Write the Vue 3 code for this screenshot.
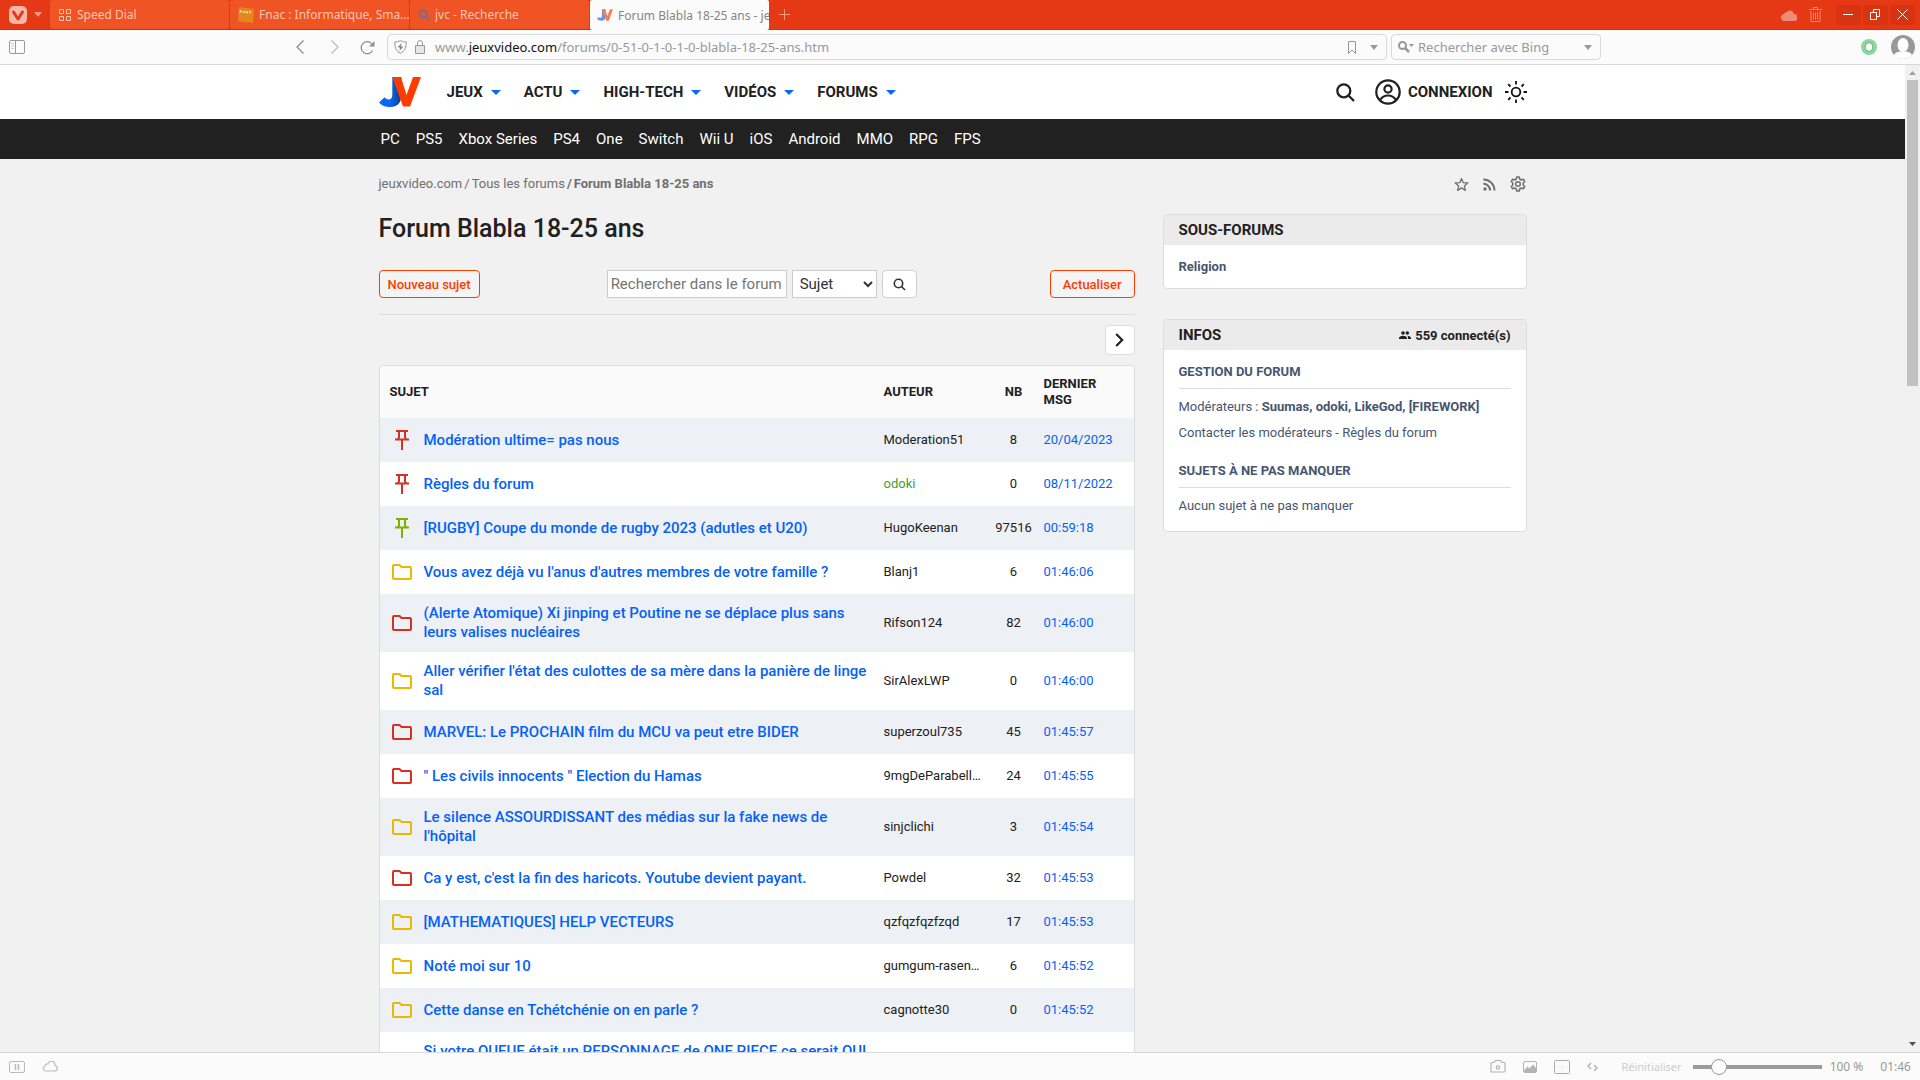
<template>
    <div class="browser">
        <header class="tabbar">
            <button class="menu-btn" aria-label="Menu">
                <svg width="18" height="18" viewBox="0 0 18 18">
                    <rect width="18" height="18" rx="5" fill="#f9b6a6" />
                    <path d="M4.500 6l4.500 7 4.500-7" fill="none" stroke="#e53814" stroke-width="3" stroke-linecap="round" stroke-linejoin="round" />
                </svg>
                <svg width="8" height="5" viewBox="0 0 8 5"><path d="M0 0h8L4 5z" fill="#f59a85" /></svg>
            </button>
            <button v-for="tab in tabs" :key="tab.label" class="tab" :class="{ active: tab.icon === 'jv' }">
                <svg v-if="tab.icon === 'grid'" width="14" height="14" viewBox="0 0 14 14" fill="none" stroke="#fbc4b3">
                    <path d="M1.500 1.500h4v4h-4zM8.500 1.500h4v4h-4zM1.500 8.500h4v4h-4zM8.500 8.500h4v4h-4z" />
                </svg>
                <svg v-else-if="tab.icon === 'fnac'" width="16" height="16" viewBox="0 0 16 16">
                    <path d="M1 0l15 2-1 14-15-1.500z" fill="#e3861b" />
                    <path d="M2 6V3.500h1.500M2 4.500h1.500M5 6V4.500h1.500V6M8 6V4.500h1.500V6H8M13 4.500h-1.500V6H13" fill="none" stroke="#fbd79a" />
                </svg>
                <svg v-else-if="tab.icon === 'search'" width="12" height="12" viewBox="0 0 12 12" fill="none" stroke="#7c6a8c" stroke-width="2">
                    <circle cx="5" cy="5" r="3.500" /><path d="M7.500 7.500l3.500 3.500" />
                </svg>
                <svg v-else width="16" height="12" viewBox="0 0 42 30">
                    <path d="M13 0h9v18q0 12-11 12Q4 30 0 25l5-5q2 2.500 4 2.500 4 0 4-5z" fill="#5c97f5" />
                    <path d="M13 0h9l5 18 7-18h8L31 30h-7z" fill="#ff7a57" />
                </svg>
                <span>{{ tab.label }}</span>
            </button>
            <button class="new-tab" aria-label="Nouvel onglet">
                <svg width="11" height="11" viewBox="0 0 11 11"><path d="M5.500 0v11M0 5.500h11" stroke="#f59a85" /></svg>
            </button>
            <div class="window-tools">
                <svg width="16" height="12" viewBox="0 0 16 12"><path d="M4 12a3.500 3.500 0 0 1-1-7 3 3 0 0 1 3-2 4 4 0 0 1 7 2 3.500 3.500 0 0 1 0 7z" fill="#f18a74" /></svg>
                <svg class="trash" width="13" height="16" viewBox="0 0 13 16" fill="none" stroke="#f18a74"><path d="M0 2.500h13M4.500 2V.5h4V2M2 4v10.500h9V4M4.500 5.500v7M6.500 5.500v7M8.500 5.500v7" /></svg>
                <button aria-label="Réduire"><svg width="11" height="11" viewBox="0 0 11 11"><path d="M0 5.500h10" stroke="#fff" /></svg></button>
                <button aria-label="Restaurer"><svg width="11" height="11" viewBox="0 0 11 11" fill="none" stroke="#fff"><path d="M.5 3.500h6v7h-6zM3.500 3V.5h6v7H7" /></svg></button>
                <button aria-label="Fermer"><svg width="11" height="11" viewBox="0 0 11 11"><path d="M.5.5l10 10M10.500.5l-10 10" stroke="#fff" /></svg></button>
            </div>
        </header>

        <div class="toolbar">
            <div class="toolbar-left">
                <button aria-label="Panneau">
                    <svg width="16" height="14" viewBox="0 0 16 14" fill="none" stroke="#999"><rect x=".5" y=".5" width="15" height="13" rx="1.500" /><path d="M6.500 1v12" /><path d="M2.500 3.500h2M2.500 6h2M2.500 8.500h2" stroke="#bbb" /></svg>
                </button>
                <div class="history">
                    <button aria-label="Précédent"><svg width="8" height="14" viewBox="0 0 8 14"><path d="M7.500.5L1 7l6.500 6.500" fill="none" stroke="#888" stroke-width="1.200" /></svg></button>
                    <button aria-label="Suivant"><svg width="8" height="14" viewBox="0 0 8 14"><path d="M.5.5L7 7l-6.500 6.500" fill="none" stroke="#bbb" stroke-width="1.200" /></svg></button>
                    <button aria-label="Recharger"><svg width="15" height="15" viewBox="0 0 15 15"><path d="M12.500 10.500A6 6 0 1 1 11.500 3.500" fill="none" stroke="#8d8d8d" stroke-width="1.300" /><path d="M14.500 1v5.500H9z" fill="#8d8d8d" /></svg></button>
                </div>
            </div>
            <div class="field url">
                <svg width="13" height="14" viewBox="0 0 13 14"><path d="M6.500.7q3 1.500 5.800 1.300 0 9-5.800 11.300Q.7 11 .7 2 3.500 2.200 6.500.7z" fill="none" stroke="#999" /><path d="M7.500 3L3.500 7.500h2.500L5.500 11l4-4.500H7z" fill="#888" /></svg>
                <svg width="10" height="14" viewBox="0 0 10 14"><path d="M.5 5.500h9v8h-9z" fill="#e6e6e6" stroke="#999" /><path d="M2.500 5.500V3a2.500 2.500 0 0 1 5 0v2.500" fill="none" stroke="#999" /></svg>
                <a class="address" href="#">www.<b>jeuxvideo.com</b>/forums/0-51-0-1-0-1-0-blabla-18-25-ans.htm</a>
                <svg class="bookmark" width="8" height="13" viewBox="0 0 8 13"><path d="M.5.5h7v12L4 9l-3.500 3.500z" fill="none" stroke="#999" /></svg>
                <svg width="8" height="5" viewBox="0 0 8 5"><path d="M0 0h8L4 5z" fill="#999" /></svg>
            </div>
            <div class="field bing">
                <svg width="16" height="12" viewBox="0 0 16 12"><circle cx="4.500" cy="4.500" r="3.500" fill="none" stroke="#999" stroke-width="2" /><path d="M7 7l4 4" stroke="#999" stroke-width="2.500" /><path d="M11 3h5l-2.500 3z" fill="#999" /></svg>
                <input type="text" placeholder="Rechercher avec Bing" aria-label="Rechercher avec Bing">
                <svg width="8" height="5" viewBox="0 0 8 5"><path d="M0 0h8L4 5z" fill="#999" /></svg>
            </div>
            <div class="extensions">
                <svg width="16" height="16" viewBox="0 0 16 16"><circle cx="8" cy="8" r="8" fill="#8ed79c" /><ellipse cx="8" cy="8" rx="4.200" ry="5" fill="#6cbb7c" /><ellipse cx="8" cy="8" rx="3.200" ry="3.800" fill="#fff" /></svg>
                <svg width="24" height="24" viewBox="0 0 24 24"><circle cx="12" cy="12" r="12" fill="#999" /><ellipse cx="12" cy="10" rx="5.500" ry="7" fill="#fff" /><path d="M3 20q1-3 6-3.500h6q5 .5 6 3.500-3 4-9 4t-9-4z" fill="#fff" /></svg>
            </div>
        </div>

        <div class="viewport">
            <div class="page">
                <div class="site-header">
                    <div class="container header-row">
                        <a href="#" class="logo" aria-label="Accueil">
                            <svg width="42" height="30" viewBox="0 0 42 30">
                                <defs>
                                    <linearGradient id="jshade" x1="0" y1="0" x2="1" y2="0">
                                        <stop offset="0.500" stop-color="#0768f8" />
                                        <stop offset="1" stop-color="#15397c" />
                                    </linearGradient>
                                </defs>
                                <path d="M13.300 0h9v18q0 12-11.300 12Q4 30 0 25.500l5.500-5.300q2 2.300 4 2.300 3.800 0 3.800-5z" fill="url(#jshade)" />
                                <path d="M13.300 0h8.700l5.500 18L34 0h8L31 29.500h-7z" fill="#ff3c00" />
                            </svg>
                        </a>
                        <nav class="main-nav">
                            <button v-for="item in mainNav" :key="item">
                                {{ item }}
                                <svg width="10" height="5" viewBox="0 0 10 5"><path d="M0 0h10L5 5z" fill="#0768f8" /></svg>
                            </button>
                        </nav>
                        <button class="icon-btn search-btn" aria-label="Rechercher">
                            <svg width="19" height="19" viewBox="0 0 19 19" fill="none" stroke="#212121" stroke-width="2.300"><circle cx="7.800" cy="7.800" r="6.500" /><path d="M12.500 12.500l5.500 5.500" /></svg>
                        </button>
                        <a href="#" class="login">
                            <svg width="26" height="26" viewBox="0 0 26 26" fill="none" stroke="#212121" stroke-width="2.200"><circle cx="13" cy="13" r="11.700" /><circle cx="13" cy="10" r="3.600" /><path d="M5 21q3-4.500 8-4.500t8 4.500" /></svg>
                            CONNEXION
                        </a>
                        <button class="icon-btn" aria-label="Mode sombre">
                            <svg width="22" height="22" viewBox="0 0 22 22" fill="none" stroke="#111" stroke-width="1.800"><circle cx="11" cy="11" r="4.300" /><path d="M11 0v3.500M11 18.500V22M0 11h3.500M18.500 11H22M3.200 3.200l2.300 2.300M16.500 16.500l2.300 2.300M18.800 3.200l-2.300 2.300M5.500 16.500l-2.300 2.300" /></svg>
                        </button>
                    </div>
                </div>
                <nav class="platforms">
                    <div class="container">
                        <a v-for="item in platforms" :key="item" href="#">{{ item }}</a>
                    </div>
                </nav>

                <div class="container breadcrumb">
                    <div class="crumbs">
                        <a href="#">jeuxvideo.com</a><span>/</span><a href="#">Tous les forums</a><b>/</b><b>Forum Blabla 18-25 ans</b>
                    </div>
                    <div class="forum-tools">
                        <button aria-label="Favori"><svg width="15" height="15" viewBox="0 0 15 15"><path d="M7.500 1.500l1.700 4.200 4.600.3-3.500 2.900 1.100 4.500-3.900-2.500-3.900 2.500 1.100-4.500L1.200 6l4.600-.3z" fill="none" stroke="#707070" stroke-width="1.300" stroke-linejoin="round" /></svg></button>
                        <button aria-label="Flux RSS"><svg width="13" height="13" viewBox="0 0 13 13" fill="none" stroke="#707070" stroke-width="2"><circle cx="2" cy="11" r="1.700" fill="#707070" stroke="none" /><path d="M.3 5.800A6.500 6.500 0 0 1 7 12.500M.3 1.500A11 11 0 0 1 11.500 12.500" /></svg></button>
                        <button aria-label="Préférences"><svg width="16" height="16" viewBox="0 0 16 16" fill="none" stroke="#707070" stroke-width="1.500" stroke-linejoin="round"><path d="M6.300 3L6.700 1h2.600l.4 2 1.700 1 2-.8 1.300 2.300L13.200 7v2l1.500 1.500-1.300 2.300-2-.8-1.700 1-.4 2H6.700l-.4-2-1.700-1-2 .8-1.300-2.300L2.800 9V7L1.300 5.500l1.300-2.300 2 .8z" /><circle cx="8" cy="8" r="2.300" /></svg></button>
                    </div>
                </div>

                <div class="container columns">
                    <main>
                        <h1>Forum Blabla 18-25 ans</h1>
                        <div class="actions">
                            <button class="outline">Nouveau sujet</button>
                            <form class="search" @submit.prevent>
                                <input v-model="query" type="text" placeholder="Rechercher dans le forum" aria-label="Rechercher dans le forum">
                                <select v-model="searchType" aria-label="Type de recherche">
                                    <option>Sujet</option>
                                    <option>Auteur</option>
                                </select>
                                <button aria-label="Lancer la recherche">
                                    <svg width="13" height="13" viewBox="0 0 13 13" fill="none" stroke="#333" stroke-width="1.600"><circle cx="5.500" cy="5.500" r="4.200" /><path d="M8.500 8.500L12 12" /></svg>
                                </button>
                            </form>
                            <button class="outline refresh">Actualiser</button>
                        </div>
                        <div class="pager">
                            <a href="#" aria-label="Page suivante"><svg width="9" height="14" viewBox="0 0 9 14"><path d="M1.200 1l6 6-6 6" fill="none" stroke="#212121" stroke-width="2.200" /></svg></a>
                        </div>
                        <div class="topics">
                            <table>
                                <colgroup>
                                    <col class="col-icon"><col><col class="col-author"><col class="col-nb"><col class="col-date">
                                </colgroup>
                                <thead>
                                    <tr>
                                        <th colspan="2">SUJET</th>
                                        <th class="author">AUTEUR</th>
                                        <th class="nb">NB</th>
                                        <th class="date">DERNIER MSG</th>
                                    </tr>
                                </thead>
                                <tbody>
                                    <tr v-for="topic in topics" :key="topic.title">
                                        <td class="icon" :class="topic.color">
                                            <svg v-if="topic.pin" width="14" height="20" viewBox="0 0 14 20" fill="none" stroke="currentColor" stroke-width="2"><path d="M1 1h12M4 1v6.500L2 10M10 1v6.500l2 2.500M0 9.500h14M7 10v10" /></svg>
                                            <svg v-else width="20" height="16" viewBox="0 0 20 16" fill="none" stroke="currentColor" stroke-width="2" stroke-linejoin="round"><path d="M1.800 1H7.500l2 2h8.600q.9 0 .9.900v10.200q0 .9-.9.900H1.900q-.9 0-.9-.9V1.900Q1 1 1.900 1z" /></svg>
                                        </td>
                                        <td class="title"><a href="#">{{ topic.title }}</a></td>
                                        <td class="author" :class="{ moderator: topic.author === 'odoki' }">{{ topic.author }}</td>
                                        <td class="nb">{{ topic.nb }}</td>
                                        <td class="date"><a href="#">{{ topic.date }}</a></td>
                                    </tr>
                                </tbody>
                            </table>
                        </div>
                    </main>

                    <aside>
                        <section class="card">
                            <h2>SOUS-FORUMS</h2>
                            <div class="card-body">
                                <a href="#" class="strong">Religion</a>
                            </div>
                        </section>
                        <section class="card">
                            <h2>
                                INFOS
                                <span class="online">
                                    <svg width="12" height="8" viewBox="0 0 12 8" fill="#212121"><circle cx="4" cy="2" r="1.800" /><circle cx="8.300" cy="2" r="1.800" /><path d="M0 8V6.500Q1 4.700 4 4.700t4 1.800V8zM9 8V6.500q0-1-.8-1.800Q11 4.800 12 6.500V8z" /></svg>
                                    559 connecté(s)
                                </span>
                            </h2>
                            <div class="card-body">
                                <h3>GESTION DU FORUM</h3>
                                <p>Modérateurs : <b>Suumas, odoki, LikeGod, [FIREWORK]</b></p>
                                <p><a href="#">Contacter les modérateurs</a> - <a href="#">Règles du forum</a></p>
                                <h3 class="spaced">SUJETS À NE PAS MANQUER</h3>
                                <p>Aucun sujet à ne pas manquer</p>
                            </div>
                        </section>
                    </aside>
                </div>
            </div>
            <div class="scrollbar">
                <svg width="7" height="4" viewBox="0 0 7 4"><path d="M0 4h7L3.500 0z" fill="#a3a3a3" /></svg>
                <div class="track"><div class="thumb"></div></div>
                <svg width="7" height="4" viewBox="0 0 7 4"><path d="M0 0h7L3.500 4z" fill="#505050" /></svg>
            </div>
        </div>

        <footer class="statusbar">
            <button aria-label="Pause"><svg width="16" height="12" viewBox="0 0 16 12" fill="none" stroke="#bbb"><rect x=".5" y=".5" width="15" height="11" rx="1.500" /><path d="M6.500 3v6M9.500 3v6" stroke-width="1.500" /></svg></button>
            <button aria-label="Synchronisation"><svg width="16" height="11" viewBox="0 0 16 11" fill="none" stroke="#bbb" stroke-width="1.200"><path d="M3.500 10a2.600 2.600 0 0 1-.5-5 2.500 2.500 0 0 1 3-2 3.500 3.500 0 0 1 7 1.500 2.800 2.800 0 0 1 0 5.500z" /></svg></button>
            <span class="spacer"></span>
            <button aria-label="Capture"><svg width="16" height="13" viewBox="0 0 16 13" fill="none" stroke="#b4b4b4" stroke-width="1.200"><path d="M1 3.500q0-1 1-1h2l1.500-2h5l1.500 2h2q1 0 1 1V11q0 1-1 1H2q-1 0-1-1z" /><circle cx="8" cy="7.500" r="1.700" /></svg></button>
            <button aria-label="Images"><svg width="14" height="12" viewBox="0 0 14 12"><rect x=".5" y=".5" width="13" height="11" rx="1.500" fill="none" stroke="#b4b4b4" /><path d="M1 9.500l3.500-4 2 2 3.500-4 3 3.500v4.500H1z" fill="#b4b4b4" /></svg></button>
            <button aria-label="Mosaïque"><svg width="16" height="14" viewBox="0 0 16 14" fill="none"><rect x=".5" y=".5" width="15" height="13" rx="1" stroke="#aaa" /><path d="M8 1v12M1 7h14" stroke="#f0f0f0" /></svg></button>
            <button aria-label="Actions"><svg width="11" height="10" viewBox="0 0 11 10" fill="none" stroke="#b0b0b0" stroke-width="1.400"><path d="M4 1L1 4l3 3M7 3l3 3-3 3" /></svg></button>
            <button class="reset">Réinitialiser</button>
            <input v-model="zoom" type="range" min="20" max="500" aria-label="Zoom">
            <span>100 %</span>
            <span>01:46</span>
        </footer>
    </div>
</template>

<script setup>
import { ref } from 'vue';

const query = ref('');
const searchType = ref('Sujet');
const zoom = ref(100);

const tabs = [
    { icon: 'grid', label: 'Speed Dial' },
    { icon: 'fnac', label: 'Fnac : Informatique, Sma…' },
    { icon: 'search', label: 'jvc - Recherche' },
    { icon: 'jv', label: 'Forum Blabla 18-25 ans - jeu' },
];

const mainNav = ['JEUX', 'ACTU', 'HIGH-TECH', 'VIDÉOS', 'FORUMS'];

const platforms = ['PC', 'PS5', 'Xbox Series', 'PS4', 'One', 'Switch', 'Wii U', 'iOS', 'Android', 'MMO', 'RPG', 'FPS'];

const topics = [
    { pin: true, color: 'red', title: 'Modération ultime= pas nous', author: 'Moderation51', nb: 8, date: '20/04/2023' },
    { pin: true, color: 'red', title: 'Règles du forum', author: 'odoki', nb: 0, date: '08/11/2022' },
    { pin: true, color: 'green', title: '[RUGBY] Coupe du monde de rugby 2023 (adutles et U20)', author: 'HugoKeenan', nb: 97516, date: '00:59:18' },
    { color: 'yellow', title: "Vous avez déjà vu l'anus d'autres membres de votre famille ?", author: 'Blanj1', nb: 6, date: '01:46:06' },
    { color: 'red', title: '(Alerte Atomique) Xi jinping et Poutine ne se déplace plus sans leurs valises nucléaires', author: 'Rifson124', nb: 82, date: '01:46:00' },
    { color: 'yellow', title: "Aller vérifier l'état des culottes de sa mère dans la panière de linge sal", author: 'SirAlexLWP', nb: 0, date: '01:46:00' },
    { color: 'red', title: 'MARVEL: Le PROCHAIN film du MCU va peut etre BIDER', author: 'superzoul735', nb: 45, date: '01:45:57' },
    { color: 'red', title: '" Les civils innocents " Election du Hamas', author: '9mgDeParabellum', nb: 24, date: '01:45:55' },
    { color: 'yellow', title: "Le silence ASSOURDISSANT des médias sur la fake news de l'hôpital", author: 'sinjclichi', nb: 3, date: '01:45:54' },
    { color: 'red', title: "Ca y est, c'est la fin des haricots. Youtube devient payant.", author: 'Powdel', nb: 32, date: '01:45:53' },
    { color: 'yellow', title: '[MATHEMATIQUES] HELP VECTEURS', author: 'qzfqzfqzfzqd', nb: 17, date: '01:45:53' },
    { color: 'yellow', title: 'Noté moi sur 10', author: 'gumgum-rasengan', nb: 6, date: '01:45:52' },
    { color: 'yellow', title: 'Cette danse en Tchétchénie on en parle ?', author: 'cagnotte30', nb: 0, date: '01:45:52' },
    { color: 'yellow', title: 'Si votre QUEUE était un PERSONNAGE de ONE PIECE ce serait QUI et pourquoi ?', author: 'luffy', nb: 4, date: '01:45:51' },
];
</script>

<style>
body {
    background: #f1f1f1;
    overflow: hidden;
}
</style>

<style scoped>
.browser {
    display: flex;
    flex-direction: column;
    height: 100vh;
    font-family: "Noto Sans", sans-serif;
    font-size: 12px;
    color: #999;
}

.browser * {
    box-sizing: border-box;
}

svg {
    display: block;
    flex: none;
}

button {
    display: flex;
    align-items: center;
    justify-content: center;
    padding: 0;
    border: 0;
    background: none;
    font: inherit;
    color: inherit;
}

a {
    color: inherit;
    text-decoration: none;
}

/* tabs */
.tabbar {
    display: flex;
    flex: none;
    height: 30px;
    background: #e53814;
    border-bottom: 1px solid #dc2f0c;
}

.menu-btn {
    width: 50px;
    gap: 7px;
}

.tab {
    flex: 0 1 179px;
    justify-content: flex-start;
    gap: 5px;
    min-width: 0;
    margin-right: 1px;
    padding-left: 8px;
    border-radius: 2px;
    background: #f05424;
    color: #fbc4b3;
    overflow: hidden;
}

.tab span {
    overflow: hidden;
    white-space: nowrap;
}

.tab.active {
    height: 30px;
    padding-left: 7px;
    background: #fbfbfb;
    color: #858585;
}

.new-tab {
    width: 28px;
}

.window-tools {
    display: flex;
    align-items: center;
    gap: 2px;
    margin-left: auto;
    padding-right: 5px;
}

.window-tools .trash {
    margin: 0 12px 0 10px;
}

.window-tools button {
    width: 25px;
    height: 20px;
    border-radius: 3px;
    background: #d93411;
}

/* address bar */
.toolbar {
    display: flex;
    flex: none;
    align-items: center;
    height: 35px;
    background: #fbfbfb;
    border-bottom: 1px solid #d9d9d9;
}

.toolbar-left {
    display: flex;
    justify-content: space-between;
    width: 387px;
    padding: 0 12px 0 9px;
}

.history {
    display: flex;
    gap: 27px;
}

.history button:last-child {
    margin-left: -6px;
}

.field {
    display: flex;
    align-items: center;
    height: 26px;
    margin-right: 4px;
    border: 1px solid #d9d9d9;
    border-radius: 4px;
    font-size: 13px;
}

.url {
    flex: 1;
    gap: 8px;
    padding: 0 8px 0 6px;
}

.address {
    flex: 1;
    padding-left: 2px;
}

.address b {
    font-weight: 400;
    color: #111;
}

.bookmark {
    margin-right: 6px;
}

.bing {
    width: 210px;
    gap: 4px;
    padding: 0 8px 0 6px;
}

.bing input {
    flex: 1;
    min-width: 0;
    padding: 0;
    border: 0;
    outline: 0;
    background: none;
    font: inherit;
}

.bing input::placeholder {
    color: #999;
}

.extensions {
    display: flex;
    align-items: center;
    justify-content: flex-end;
    gap: 14px;
    width: 315px;
    padding-right: 5px;
}

/* page */
.viewport {
    display: flex;
    flex: 1;
    min-height: 0;
}

.page {
    flex: 1;
    min-width: 0;
    overflow: hidden;
    background: #f1f1f1;
    font-family: Roboto, sans-serif;
    color: #212121;
}

.container {
    max-width: 1148px;
    margin: 0 auto;
}

.site-header {
    background: #fff;
}

.header-row {
    display: flex;
    align-items: center;
    height: 54px;
    font-size: 15px;
    font-weight: 700;
}

.main-nav {
    display: flex;
    gap: 23px;
    margin-left: 26px;
    margin-right: auto;
}

.main-nav button {
    gap: 8px;
}

.search-btn {
    margin-right: 20px;
}

.login {
    display: flex;
    align-items: center;
    gap: 7px;
    margin-right: 12px;
}

.platforms {
    background: #212121;
    color: #fff;
    font-size: 15px;
}

.platforms .container {
    display: flex;
    align-items: center;
    gap: 16px;
    height: 40px;
    padding-left: 2px;
}

.breadcrumb {
    display: flex;
    justify-content: space-between;
    align-items: center;
    height: 50px;
    font-size: 13px;
    color: #707070;
}

.crumbs {
    display: flex;
    gap: 2px;
    padding-bottom: 2px;
}

.forum-tools {
    display: flex;
    gap: 14px;
    padding-right: 1px;
}

.columns {
    display: grid;
    grid-template-columns: minmax(0, 1fr) 364px;
    gap: 28px;
}

h1 {
    margin: 4px 0 25px;
    font-size: 25px;
    line-height: 32px;
    font-weight: 500;
}

.actions {
    display: flex;
    align-items: center;
    justify-content: space-between;
    padding-bottom: 16px;
    border-bottom: 1px solid #dcdcdc;
}

.outline {
    height: 28px;
    padding: 0 8px;
    border: 1px solid #ff3c00;
    border-radius: 4px;
    background: #f4f4f4;
    font-size: 13px;
    font-weight: 500;
    color: #ff3c00;
}

.refresh {
    padding: 0 12px;
}

.search {
    display: flex;
    gap: 5px;
    margin-right: 6px;
}

.search input,
.search select {
    height: 28px;
    border: 1px solid #ccc;
    background: #fff;
    font-family: inherit;
    font-size: 15px;
    color: #333;
}

.search input {
    width: 180px;
    padding: 0 3px;
}

.search select {
    width: 85px;
    padding: 0 3px;
}

.search button {
    width: 35px;
    border: 1px solid #d0d0d0;
    border-radius: 4px;
    background: #fff;
}

.pager {
    display: flex;
    justify-content: flex-end;
    padding: 10px 0;
}

.pager a {
    display: flex;
    align-items: center;
    justify-content: center;
    width: 30px;
    height: 30px;
    border: 1px solid #dcdcdc;
    border-radius: 4px;
    background: #fff;
}

.topics {
    border: 1px solid #dcdcdc;
    border-radius: 4px;
    overflow: hidden;
}

table {
    width: 100%;
    table-layout: fixed;
    border-collapse: collapse;
    font-size: 13px;
}

.col-icon {
    width: 44px;
}

.col-author {
    width: 114px;
}

.col-nb {
    width: 50px;
}

.col-date {
    width: 96px;
}

th {
    height: 52px;
    padding: 0 10px;
    background: #fafafa;
    line-height: 16px;
    font-weight: 700;
    text-align: left;
}

td {
    height: 44px;
    padding: 0 0 2px;
}

tbody tr {
    background: #fff;
}

tbody tr:nth-child(odd) {
    background: #edf0f5;
}

.icon {
    padding: 0;
}

.icon svg {
    margin: 0 auto;
}

.red {
    color: #d83020;
}

.green {
    color: #7fb000;
}

.yellow {
    color: #e9b800;
}

.title {
    padding: 10px 6px 10px 0;
    font-size: 15px;
    line-height: 19px;
    font-weight: 500;
    color: #0562f5;
}

.author {
    padding-left: 10px;
    padding-right: 4px;
    overflow: hidden;
    text-overflow: ellipsis;
    white-space: nowrap;
}

.moderator {
    color: #3fa033;
}

.nb {
    padding-left: 2px;
    padding-right: 0;
    text-align: center;
}

.date {
    padding-left: 6px;
    padding-right: 20px;
}

.date a {
    color: #0562f5;
}

/* sidebar */
aside {
    padding-top: 5px;
}

.card {
    margin-bottom: 30px;
    border: 1px solid #dcdcdc;
    border-radius: 4px;
    background: #fff;
    overflow: hidden;
    font-size: 13px;
    color: #475670;
}

.card h2 {
    display: flex;
    align-items: center;
    justify-content: space-between;
    height: 30px;
    margin: 0;
    padding: 0 15px;
    background: #ebebeb;
    font-size: 15px;
    font-weight: 700;
    color: #212121;
}

.online {
    display: flex;
    align-items: center;
    gap: 4px;
    font-size: 13px;
}

.card-body {
    padding: 12px 15px 11px;
    line-height: 20px;
}

.card-body .strong {
    font-weight: 700;
}

.card h3 {
    margin: 0 0 8px;
    padding-bottom: 6px;
    border-bottom: 1px solid #dcdcdc;
    font-size: 13px;
    line-height: 20px;
}

.card .spaced {
    padding-top: 12px;
}

.card p {
    margin: 0 0 6px;
}

.card p:last-child {
    margin-bottom: 4px;
}

.scrollbar {
    display: flex;
    flex-direction: column;
    align-items: center;
    width: 15px;
    padding: 6px 0;
    background: #f1f1f1;
}

.track {
    flex: 1;
    align-self: stretch;
    padding: 5px 2px;
}

.thumb {
    height: 32%;
    background: #c1c1c1;
}

/* status bar */
.statusbar {
    display: flex;
    flex: none;
    align-items: center;
    gap: 17px;
    height: 28px;
    padding: 0 9px;
    background: #fbfbfb;
    border-top: 1px solid #d9d9d9;
}

.spacer {
    flex: 1;
}

.reset {
    margin-left: 6px;
    font-size: 11px;
    color: #ccc;
}

.statusbar input {
    appearance: none;
    width: 129px;
    height: 16px;
    margin: 0 -9px 0 -6px;
    background: linear-gradient(#9b9b9b, #9b9b9b) center / 100% 4px no-repeat;
}

.statusbar input::-webkit-slider-thumb {
    appearance: none;
    width: 16px;
    height: 16px;
    border: 1px solid #999;
    border-radius: 50%;
    background: #fff;
}
</style>
